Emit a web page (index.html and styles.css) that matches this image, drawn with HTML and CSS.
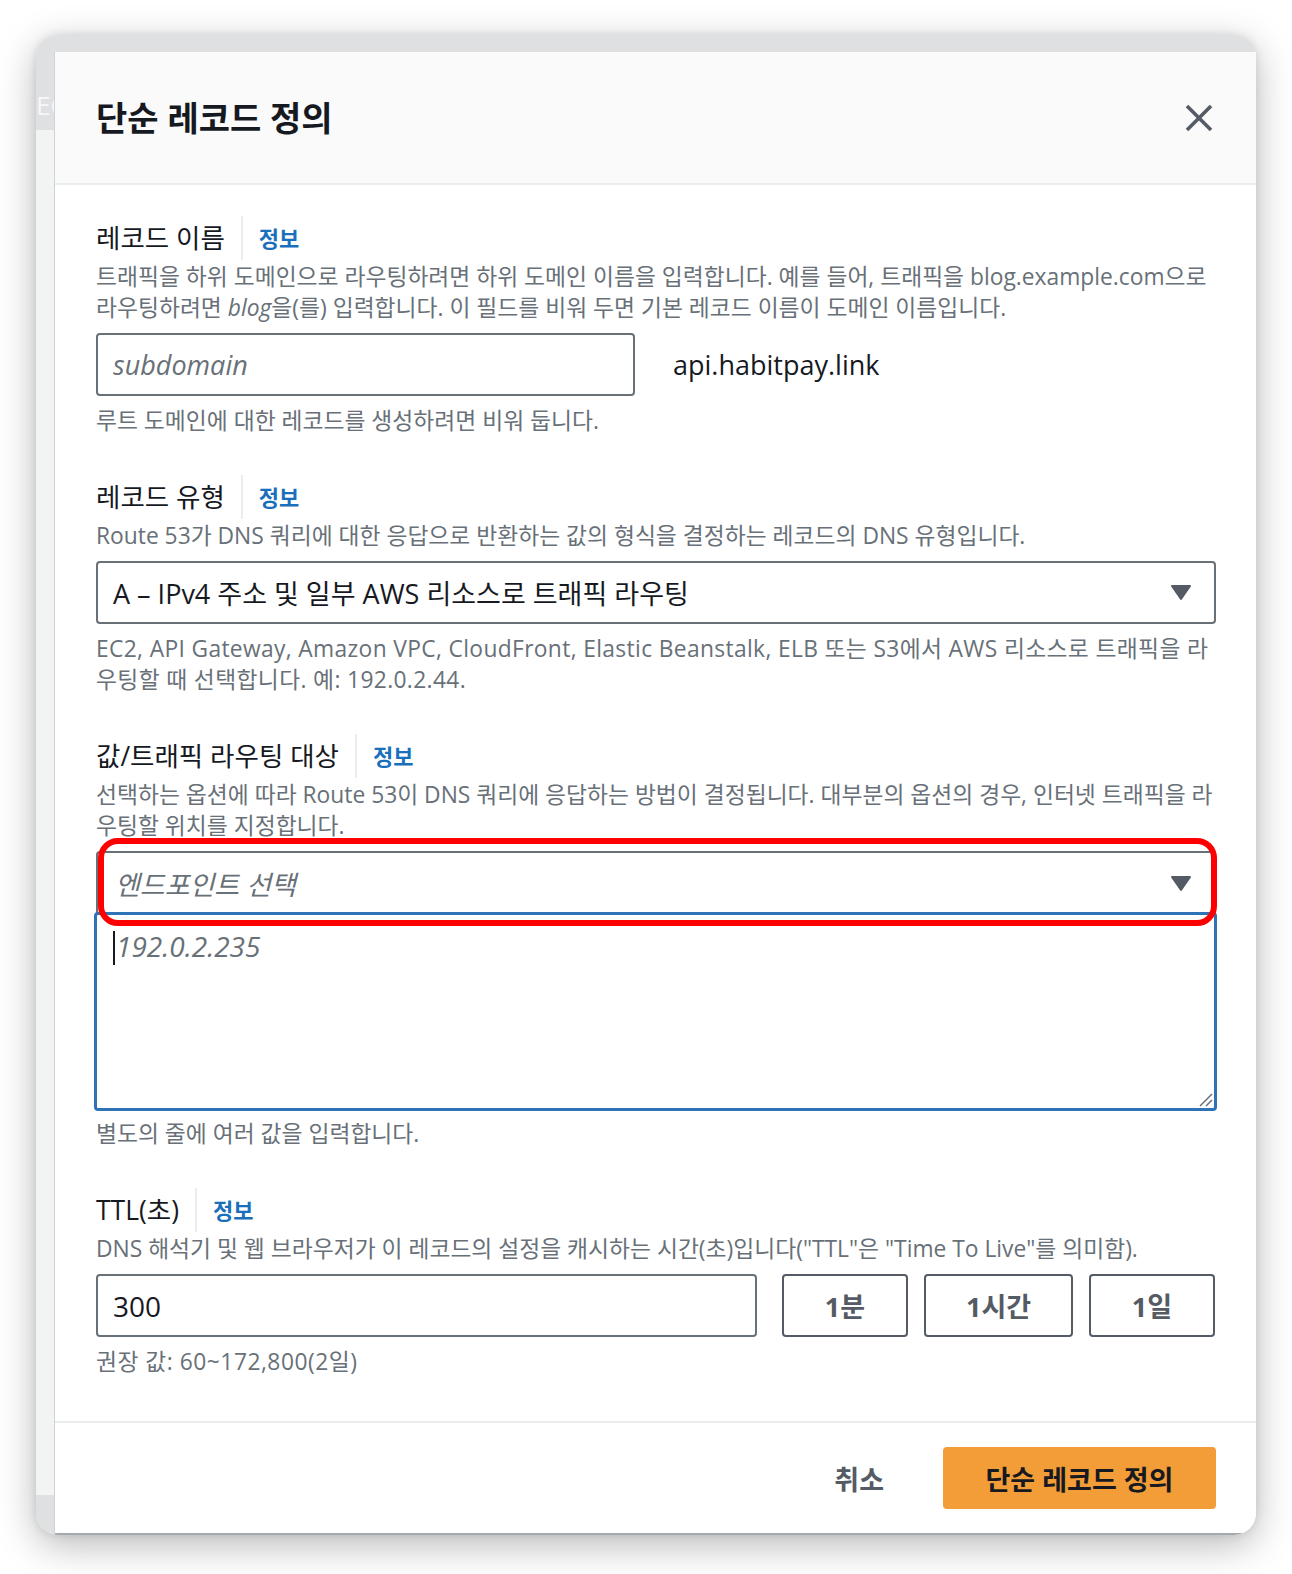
FILE: index.html
```html
<!DOCTYPE html>
<html lang="ko">
<head>
<meta charset="utf-8">
<title>단순 레코드 정의</title>
<link rel="stylesheet" href="styles.css">
</head>
<body>
<div class="window">
  <div class="top-strip"></div>
  <div class="side-strip"><span class="side-text">EC2</span></div>
  <div class="modal">
    <header class="modal-header">
      <h2 class="modal-title">단순 레코드 정의</h2>
      <button class="close" aria-label="닫기">
        <svg width="28" height="28" viewBox="0 0 28 28"><path d="M2 2 L26 26 M26 2 L2 26" stroke="#545b64" stroke-width="3.6" fill="none"/></svg>
      </button>
    </header>

    <div class="modal-body">
      <section class="field">
        <div class="label-row"><span class="label">레코드 이름</span><span class="sep"></span><a class="info">정보</a></div>
        <p class="desc">트래픽을 하위 도메인으로 라우팅하려면 하위 도메인 이름을 입력합니다. 예를 들어, 트래픽을 blog.example.com으로 라우팅하려면 <i>blog</i>을(를) 입력합니다. 이 필드를 비워 두면 기본 레코드 이름이 도메인 이름입니다.</p>
        <div class="control name-row">
          <div class="input name-input"><span class="placeholder">subdomain</span></div>
          <span class="domain">api.habitpay.link</span>
        </div>
        <p class="constraint">루트 도메인에 대한 레코드를 생성하려면 비워 둡니다.</p>
      </section>

      <section class="field">
        <div class="label-row"><span class="label">레코드 유형</span><span class="sep"></span><a class="info">정보</a></div>
        <p class="desc">Route 53가 DNS 쿼리에 대한 응답으로 반환하는 값의 형식을 결정하는 레코드의 DNS 유형입니다.</p>
        <div class="control input select">
          <span class="value">A – IPv4 주소 및 일부 AWS 리소스로 트래픽 라우팅</span>
          <svg class="caret-down" width="22" height="17" viewBox="0 0 22 17"><path d="M2 2 H20 L11 15 Z" fill="#545b64" stroke="#545b64" stroke-width="2" stroke-linejoin="round"/></svg>
        </div>
        <p class="constraint wide">EC2, API Gateway, Amazon VPC, CloudFront, Elastic Beanstalk, ELB 또는 S3에서 AWS 리소스로 트래픽을 라우팅할 때 선택합니다. 예: 192.0.2.44.</p>
      </section>

      <section class="field">
        <div class="label-row"><span class="label">값/트래픽 라우팅 대상</span><span class="sep"></span><a class="info">정보</a></div>
        <p class="desc">선택하는 옵션에 따라 Route 53이 DNS 쿼리에 응답하는 방법이 결정됩니다. 대부분의 옵션의 경우, 인터넷 트래픽을 라우팅할 위치를 지정합니다.</p>
        <div class="control combo">
          <div class="input select endpoint">
            <span class="placeholder">엔드포인트 선택</span>
            <svg class="caret-down" width="22" height="17" viewBox="0 0 22 17"><path d="M2 2 H20 L11 15 Z" fill="#545b64" stroke="#545b64" stroke-width="2" stroke-linejoin="round"/></svg>
          </div>
          <div class="textarea">
            <span class="text-caret"></span><span class="placeholder">192.0.2.235</span>
            <svg class="grip" width="16" height="16" viewBox="0 0 16 16"><path d="M15 3 L3 15 M15 9 L9 15" stroke="#687078" stroke-width="1.5"/></svg>
          </div>
          <div class="highlight"></div>
        </div>
        <p class="constraint tight">별도의 줄에 여러 값을 입력합니다.</p>
      </section>

      <section class="field">
        <div class="label-row"><span class="label">TTL(초)</span><span class="sep"></span><a class="info">정보</a></div>
        <p class="desc">DNS 해석기 및 웹 브라우저가 이 레코드의 설정을 캐시하는 시간(초)입니다("TTL"은 "Time To Live"를 의미함).</p>
        <div class="control ttl-row">
          <div class="input ttl-input"><span class="value">300</span></div>
          <div class="ttl-buttons">
            <button class="btn-normal w-min">1분</button>
            <button class="btn-normal w-hour">1시간</button>
            <button class="btn-normal w-min">1일</button>
          </div>
        </div>
        <p class="constraint wider">권장 값: 60~172,800(2일)</p>
      </section>
    </div>

    <footer class="modal-footer">
      <button class="btn-link">취소</button>
      <button class="btn-primary">단순 레코드 정의</button>
    </footer>
  </div>
</div>
</body>
</html>
```

FILE: styles.css
```css
* { box-sizing: border-box; }

html, body { margin: 0; }

body {
  width: 1292px;
  height: 1574px;
  overflow: hidden;
  background: #ffffff;
  padding: 35px 36px 0 36px;
  font-family: "Open Sans", "Noto Sans CJK KR", sans-serif;
  color: #16191f;
}

.window {
  width: 1220px;
  height: 1500px;
  border-radius: 22px;
  overflow: hidden;
  display: grid;
  grid-template-columns: 19px 1fr;
  grid-template-rows: 17px 1fr;
  background: #f2f3f3;
  box-shadow: 0 10px 38px rgba(0, 0, 0, 0.28), 0 0 8px rgba(0, 0, 0, 0.10);
}

.top-strip {
  grid-column: 1 / 3;
  background: #dfe0e2;
}

.side-strip {
  overflow: hidden;
  white-space: nowrap;
  background: linear-gradient(#dfe0e2 0 78px, #f2f3f3 78px calc(100% - 40px), #dfe0e2 calc(100% - 40px));
}

.side-text {
  display: block;
  padding-top: 38px;
  font-size: 26px;
  line-height: 30px;
  color: #f7f7f8;
}

.modal {
  display: flex;
  flex-direction: column;
  background: #ffffff;
  box-shadow: -1px 0 0 #cfd3d7;
  border-bottom: 2px solid #a3a9af;
  min-height: 0;
}

/* header */
.modal-header {
  height: 133px;
  flex: none;
  display: flex;
  align-items: center;
  justify-content: space-between;
  padding: 0 43px 0 41px;
  background: #fafafa;
  border-bottom: 2px solid #eaeded;
}

.modal-title {
  margin: 0;
  font-size: 34px;
  font-weight: 700;
  line-height: 40px;
  color: #16191f;
}

.close {
  border: 0;
  background: none;
  padding: 0;
  width: 28px;
  height: 28px;
  display: flex;
}

/* body */
.modal-body {
  flex: 1;
  padding: 31px 40px 0 41px;
}

.field + .field { margin-top: 39px; }

.label-row {
  display: flex;
  align-items: center;
  height: 44px;
}

.label {
  font-size: 26.5px;
  line-height: 32px;
  color: #16191f;
}

.sep {
  align-self: stretch;
  width: 2px;
  margin: 0 16px;
  background: #eaeded;
}

.info {
  font-size: 22px;
  font-weight: 700;
  color: #1a6fbd;
  line-height: 30px;
}

.desc,
.constraint {
  margin: 0;
  font-size: 22.8px;
  line-height: 31px;
  color: #687078;
}

.desc { margin-top: 1px; }

.constraint { margin-top: 9px; }
.constraint.tight { margin-top: 7px; }
.constraint.wide { letter-spacing: 0.35px; }
.constraint.wider { letter-spacing: 0.5px; }

.control { margin-top: 10px; }

.input {
  height: 63px;
  border: 2px solid #687078;
  border-radius: 4px;
  background: #fff;
  display: flex;
  align-items: center;
  padding: 0 15px;
  font-size: 27px;
}

.placeholder {
  font-style: italic;
  color: #687078;
}

.value { color: #16191f; }

.name-row {
  display: flex;
  align-items: center;
}

.name-input { width: 539px; }

.domain {
  margin-left: 38px;
  font-size: 27px;
  color: #16191f;
}

.select {
  justify-content: space-between;
  padding-right: 22px;
}

/* value / endpoint combo */
.combo {
  position: relative;
}

.endpoint {
  border-bottom: 0;
  border-radius: 4px 4px 0 0;
  padding-left: 17px;
}

.textarea {
  position: relative;
  height: 199px;
  margin: -2px -1px 0 -2px;
  border: 3px solid #2f73b7;
  border-radius: 4px;
  padding: 12px 0 0 16px;
  font-size: 28px;
  line-height: 38px;
}

.text-caret {
  display: inline-block;
  width: 2px;
  height: 34px;
  margin-right: 1px;
  vertical-align: -8px;
  background: #16191f;
}

.grip {
  position: absolute;
  right: 1px;
  bottom: 1px;
}

.highlight {
  position: absolute;
  left: 2px;
  top: -13px;
  width: 1119px;
  height: 88px;
  border: 6px solid #ff0000;
  border-radius: 20px;
  pointer-events: none;
}

/* ttl */
.ttl-row {
  display: flex;
  align-items: center;
}

.ttl-input { width: 661px; }

.ttl-input .value { font-size: 28px; }

.ttl-buttons {
  display: flex;
  gap: 16px;
  margin-left: 25px;
}

.btn-normal {
  height: 63px;
  border: 2px solid #545b64;
  border-radius: 4px;
  background: #fff;
  font-family: inherit;
  font-size: 27px;
  font-weight: 700;
  color: #545b64;
  padding: 0;
}

.w-min { width: 126px; }
.w-hour { width: 149px; }

/* footer */
.modal-footer {
  flex: none;
  display: flex;
  justify-content: flex-end;
  align-items: center;
  gap: 31px;
  padding: 24px 40px 24px 41px;
  border-top: 2px solid #eaeded;
}

.btn-link {
  height: 62px;
  border: 0;
  background: none;
  padding: 0 28px;
  font-family: inherit;
  font-size: 27px;
  font-weight: 700;
  color: #545b64;
}

.btn-primary {
  height: 62px;
  width: 273px;
  border: 0;
  border-radius: 4px;
  background: #f29d38;
  font-family: inherit;
  font-size: 27px;
  font-weight: 700;
  color: #16191f;
  padding: 0;
}
```
